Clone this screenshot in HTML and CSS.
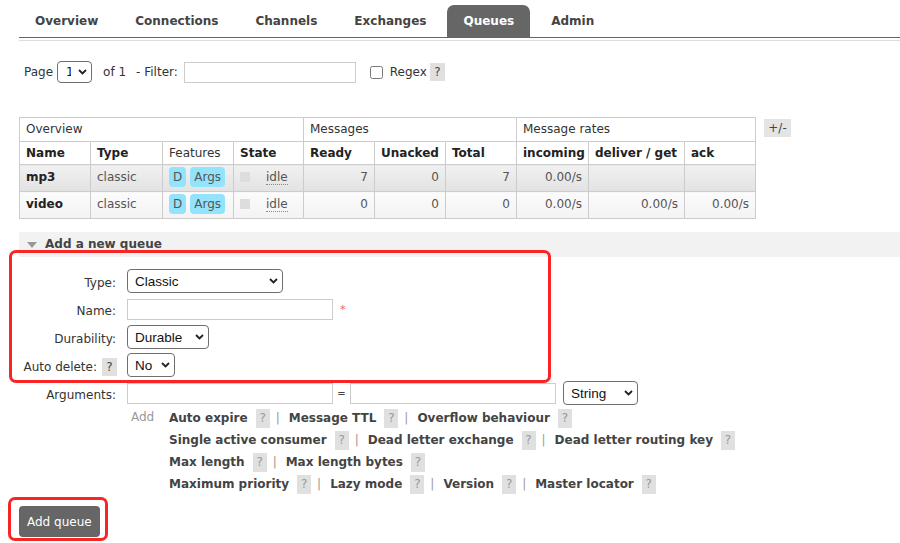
FILE: index.html
```html
<!DOCTYPE html>
<html>
<head>
<meta charset="utf-8">
<title>Queues</title>
<link rel="stylesheet" href="styles.css">
</head>
<body>
<div class="page">
  <nav class="tabs">
    <a class="tab">Overview</a>
    <a class="tab">Connections</a>
    <a class="tab">Channels</a>
    <a class="tab">Exchanges</a>
    <a class="tab active">Queues</a>
    <a class="tab">Admin</a>
  </nav>
  <div class="tabs-rule"></div>

  <div class="pager">
    <span class="pg-label">Page</span>
    <span class="sel sel-page"><select><option>1</option></select><svg class="chev" width="9" height="6" viewBox="0 0 9 6"><path d="M1 1l3.5 3.5L8 1" fill="none" stroke="#222" stroke-width="1.8"/></svg></span>
    <span class="pg-of">of 1</span>
    <span class="pg-filter">- Filter:</span>
    <input class="txt filter" type="text">
    <input class="chk" type="checkbox">
    <span class="pg-regex">Regex</span>
    <span class="help dark">?</span>
  </div>

  <div class="table-row">
    <table class="list">
      <colgroup>
        <col style="width:71px"><col style="width:72px"><col style="width:71px"><col style="width:70px">
        <col style="width:71px"><col style="width:71px"><col style="width:71px">
        <col style="width:72px"><col style="width:96px"><col style="width:71px">
      </colgroup>
      <thead>
        <tr class="h1">
          <th colspan="4">Overview</th>
          <th colspan="3">Messages</th>
          <th colspan="3">Message rates</th>
        </tr>
        <tr class="h2">
          <th>Name</th><th>Type</th><th class="plain">Features</th><th>State</th>
          <th>Ready</th><th>Unacked</th><th>Total</th>
          <th>incoming</th><th>deliver / get</th><th>ack</th>
        </tr>
      </thead>
      <tbody>
        <tr class="alt1">
          <td class="name">mp3</td>
          <td>classic</td>
          <td><span class="badge">D</span><span class="badge">Args</span></td>
          <td><span class="state"></span><abbr class="idle">idle</abbr></td>
          <td class="num">7</td><td class="num">0</td><td class="num">7</td>
          <td class="num">0.00/s</td><td class="num"></td><td class="num"></td>
        </tr>
        <tr class="alt2">
          <td class="name">video</td>
          <td>classic</td>
          <td><span class="badge">D</span><span class="badge">Args</span></td>
          <td><span class="state"></span><abbr class="idle">idle</abbr></td>
          <td class="num">0</td><td class="num">0</td><td class="num">0</td>
          <td class="num">0.00/s</td><td class="num">0.00/s</td><td class="num">0.00/s</td>
        </tr>
      </tbody>
    </table>
    <span class="plusminus">+/-</span>
  </div>

  <div class="section-head"><span class="tri"></span>Add a new queue</div>

  <div class="form">
    <label class="lbl">Type:</label>
    <div class="fld"><span class="sel sel-type"><select><option>Classic</option></select><svg class="chev" width="9" height="6" viewBox="0 0 9 6"><path d="M1 1l3.5 3.5L8 1" fill="none" stroke="#222" stroke-width="1.8"/></svg></span></div>

    <label class="lbl">Name:</label>
    <div class="fld"><input class="txt wide" type="text"><span class="req">*</span></div>

    <label class="lbl">Durability:</label>
    <div class="fld"><span class="sel sel-dur"><select><option>Durable</option></select><svg class="chev" width="9" height="6" viewBox="0 0 9 6"><path d="M1 1l3.5 3.5L8 1" fill="none" stroke="#222" stroke-width="1.8"/></svg></span></div>

    <label class="lbl">Auto delete: <span class="help dark">?</span></label>
    <div class="fld"><span class="sel sel-no"><select><option>No</option></select><svg class="chev" width="9" height="6" viewBox="0 0 9 6"><path d="M1 1l3.5 3.5L8 1" fill="none" stroke="#222" stroke-width="1.8"/></svg></span></div>

    <label class="lbl">Arguments:</label>
    <div class="fld">
      <input class="txt wide" type="text"><span class="eq">=</span><input class="txt wide" type="text">
      <span class="sel sel-str"><select><option>String</option></select><svg class="chev" width="9" height="6" viewBox="0 0 9 6"><path d="M1 1l3.5 3.5L8 1" fill="none" stroke="#222" stroke-width="1.8"/></svg></span>
    </div>

    <div></div>
    <div class="adds">
      <span class="add-lbl">Add</span>
      <div class="links">
        <div class="line"><span class="lk">Auto expire</span><span class="help">?</span><span class="sep">|</span><span class="lk">Message TTL</span><span class="help">?</span><span class="sep">|</span><span class="lk">Overflow behaviour</span><span class="help">?</span></div>
        <div class="line"><span class="lk">Single active consumer</span><span class="help">?</span><span class="sep">|</span><span class="lk">Dead letter exchange</span><span class="help">?</span><span class="sep">|</span><span class="lk">Dead letter routing key</span><span class="help">?</span></div>
        <div class="line"><span class="lk">Max length</span><span class="help">?</span><span class="sep">|</span><span class="lk">Max length bytes</span><span class="help">?</span></div>
        <div class="line"><span class="lk">Maximum priority</span><span class="help">?</span><span class="sep">|</span><span class="lk">Lazy mode</span><span class="help">?</span><span class="sep">|</span><span class="lk">Version</span><span class="help">?</span><span class="sep">|</span><span class="lk">Master locator</span><span class="help">?</span></div>
      </div>
    </div>
  </div>

  <button class="btn" type="button">Add queue</button>
</div>

<div class="annot annot-form"></div>
<div class="annot annot-btn"></div>
</body>
</html>
```

FILE: styles.css
```css
* { box-sizing: border-box; }

html, body {
  margin: 0;
  padding: 0;
  background: #fff;
}

body {
  font-family: "DejaVu Sans", Verdana, sans-serif;
  font-size: 12px;
  color: #444;
  position: relative;
  width: 900px;
  height: 543px;
  overflow: hidden;
}

.page {
  padding-left: 19px;
}

/* Tabs */
.tabs {
  display: flex;
  padding-top: 5px;
  border-bottom: 1px solid #666;
}

.tab {
  display: block;
  height: 32px;
  line-height: 32px;
  padding: 0 16px;
  margin-right: 5px;
  font-weight: bold;
  color: #444;
  border-radius: 7px 7px 0 0;
}

.tab.active {
  background: #666;
  color: #fff;
}

.tabs-rule {
  margin-top: 2px;
  border-top: 1px solid #ddd;
}

/* Pager */
.pager {
  display: flex;
  align-items: center;
  height: 22px;
  margin-top: 20px;
  padding-left: 5px;
  color: #333;
}

.pg-label { margin-right: 4px; }
.pg-of { margin-left: 11px; margin-right: 10px; }
.pg-filter { margin-right: 6px; }
.pg-regex { margin-left: 7px; margin-right: 3px; }

.chk {
  margin: 0 0 0 14px;
  width: 13px;
  height: 13px;
}

.txt {
  height: 21px;
  border: 1px solid #ccc;
  background: #fff;
  padding: 0 3px;
  margin: 0;
  font-family: "DejaVu Sans", sans-serif;
  font-size: 12px;
}

.filter { width: 172px; }
.wide { width: 206px; }

/* Selects */
.sel {
  position: relative;
  display: inline-block;
  vertical-align: middle;
}

.sel select {
  -webkit-appearance: none;
  appearance: none;
  height: 24px;
  border: 1px solid #6f6f6f;
  border-radius: 4px;
  background: #fff;
  color: #111;
  font-family: "Liberation Sans", Arial, sans-serif;
  font-size: 13.5px;
  padding: 0 20px 0 7px;
  margin: 0;
  display: block;
}

.sel .chev {
  position: absolute;
  right: 5px;
  top: 50%;
  margin-top: -3px;
  pointer-events: none;
}

.sel-page select {
  width: 35px;
  height: 22px;
  font-family: "DejaVu Sans", sans-serif;
  font-size: 12px;
  padding-left: 8px;
}
.sel-type select { width: 156px; }
.sel-dur select { width: 82px; }
.sel-no select { width: 48px; }
.sel-str select { width: 75px; }
.sel-str { margin-left: 7px; }

/* Help boxes */
.help {
  display: inline-block;
  width: 14px;
  height: 19px;
  line-height: 19px;
  text-align: center;
  background: #e0e0e0;
  color: #999;
  font-weight: normal;
}

.help.dark {
  width: 15px;
  height: 18px;
  line-height: 18px;
  color: #444;
}

/* Table */
.table-row {
  display: flex;
  align-items: flex-start;
  margin-top: 34px;
}

.list {
  border-collapse: collapse;
  table-layout: fixed;
  width: 737px;
}

.list th,
.list td {
  border: 1px solid #ccc;
  text-align: left;
  white-space: nowrap;
  overflow: hidden;
  font-size: 12px;
}

.list tr.h1 th {
  font-weight: normal;
  color: #333;
  padding: 4px 6px;
  line-height: 15px;
  background: #fff;
}

.list tr.h2 th {
  font-weight: bold;
  color: #222;
  padding: 4px 6px;
  line-height: 14px;
  background: #fff;
}

.list tr.h2 th.plain {
  font-weight: normal;
  color: #333;
}

.list td {
  padding: 2px 6px 4px;
  line-height: 20px;
  color: #555;
  vertical-align: top;
}

.list tr.alt1 td {
  background: linear-gradient(#f1f1f1, #e2e2e2);
}

.list tr.alt2 td {
  background: linear-gradient(#fbfbfb, #f3f3f3);
}

.list td.name {
  font-weight: bold;
  color: #222;
}

.list td.num {
  text-align: right;
}

.badge {
  display: inline-block;
  height: 20px;
  line-height: 20px;
  padding: 0 4px;
  margin-right: 4px;
  border-radius: 4px;
  background: #93e3fc;
  color: #555;
}

.state {
  display: inline-block;
  width: 10px;
  height: 10px;
  background: #ddd;
  margin-right: 16px;
  vertical-align: -1px;
}

.idle {
  text-decoration: none;
  border-bottom: 1px dotted #888;
  line-height: 14px;
  display: inline-block;
}

.plusminus {
  display: inline-block;
  margin-left: 8px;
  margin-top: 2px;
  width: 27px;
  height: 18px;
  line-height: 18px;
  text-align: center;
  background: #e4e4e4;
  color: #444;
}

/* Section */
.section-head {
  margin-top: 13px;
  height: 25px;
  line-height: 25px;
  background: #f2f2f2;
  font-weight: bold;
  color: #444;
  padding-left: 8px;
  display: flex;
  align-items: center;
}

.tri {
  width: 0;
  height: 0;
  border-left: 5px solid transparent;
  border-right: 5px solid transparent;
  border-top: 6px solid #999;
  margin-right: 8px;
}

/* Form */
.form {
  display: grid;
  grid-template-columns: 97px auto;
  grid-template-rows: repeat(5, 28px) auto;
  column-gap: 11px;
  margin-top: 10px;
}

.lbl {
  display: flex;
  align-items: center;
  justify-content: flex-end;
  color: #333;
  white-space: nowrap;
  padding-top: 4px;
}

.lbl .help { margin-left: 5px; margin-right: -1px; }

.fld {
  display: flex;
  align-items: center;
}

.req {
  color: #f06060;
  margin-left: 7px;
  font-size: 11px;
}

.eq {
  display: inline-block;
  width: 17px;
  text-align: center;
  color: #444;
  font-size: 10px;
}

.adds {
  display: flex;
  padding-left: 4px;
}

.add-lbl {
  width: 38px;
  color: #999;
  line-height: 20px;
}

.links .line {
  height: 22px;
  display: flex;
  align-items: center;
}

.lk {
  font-weight: bold;
  color: #444;
}

.line .help { margin-left: 8px; }

.sep {
  color: #999;
  margin: 0 9px 0 6px;
}

/* Button */
.btn {
  display: block;
  margin-top: 11px;
  height: 31px;
  padding: 0 8px;
  border: none;
  border-radius: 4px;
  background: #666;
  color: #fff;
  font-family: "DejaVu Sans", Verdana, sans-serif;
  font-size: 12px;
}

/* Red annotation frames (overlay) */
.annot {
  position: absolute;
  border: 3px solid #fa2424;
  border-radius: 7px;
  pointer-events: none;
}

.annot-form {
  left: 9px;
  top: 250px;
  width: 542px;
  height: 133px;
}

.annot-btn {
  left: 8px;
  top: 497px;
  width: 100px;
  height: 44px;
}
```
